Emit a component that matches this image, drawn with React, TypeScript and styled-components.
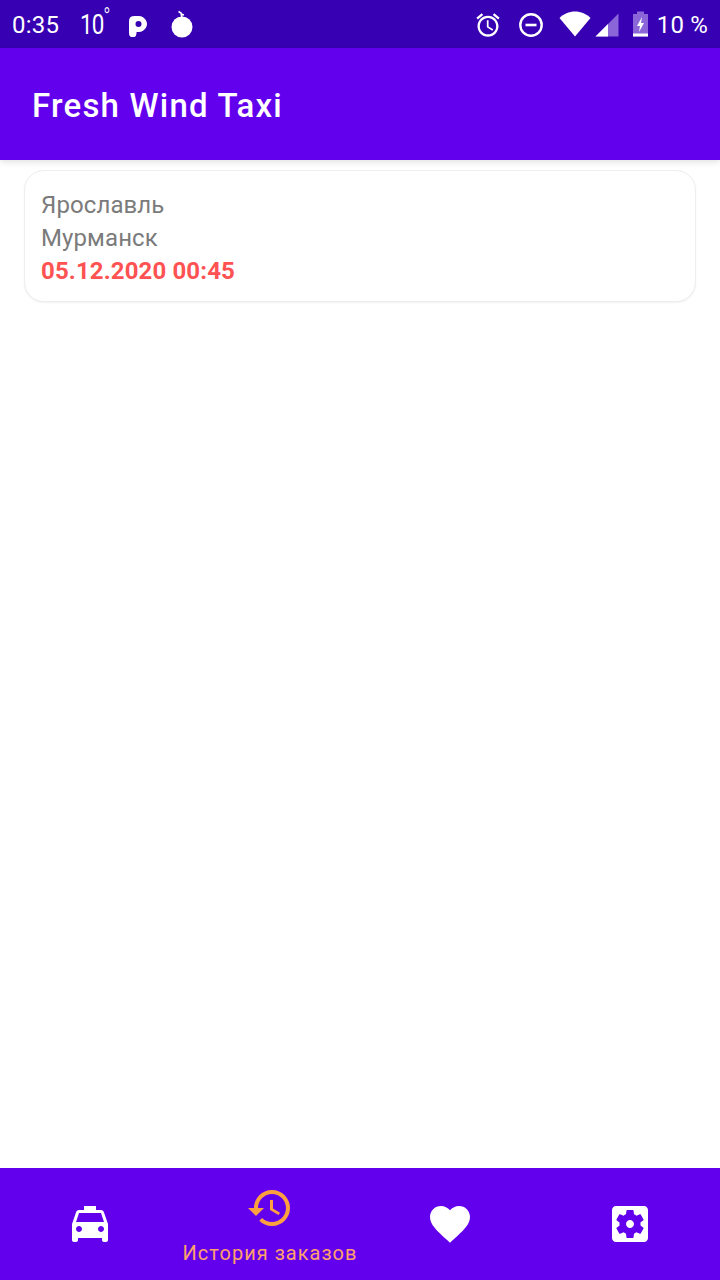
import * as React from "react";
import styled, { createGlobalStyle } from "styled-components";

const GlobalStyle = createGlobalStyle`
  html, body {
    margin: 0;
    padding: 0;
    background: #ffffff;
  }
  * {
    box-sizing: border-box;
  }
`;

/// Styles

const Screen = styled.div`
  display: flex;
  flex-direction: column;
  width: 720px;
  height: 1280px;
  overflow: hidden;
  background: #ffffff;
  font-family: Roboto, "Noto Sans", sans-serif;
`;

const StatusBar = styled.div`
  display: flex;
  justify-content: space-between;
  align-items: center;
  height: 48px;
  padding: 0 12px 0 12px;
  background: #3700b3;
  color: #ffffff;
`;

const StatusGroup = styled.div`
  display: flex;
  align-items: center;
`;

const StatusText = styled.span<{ $gap?: number }>`
  margin-left: ${p => p.$gap || 0}px;
  padding-top: 2px;
  font-size: 24px;
  font-weight: 400;
  letter-spacing: 0.2px;
  line-height: 48px;
  white-space: nowrap;
`;

const Temperature = styled.span`
  position: relative;
  margin-left: 21px;
  width: 48px;
  padding-top: 2px;
  font-size: 28px;
  font-weight: 400;
  line-height: 48px;
  letter-spacing: -1px;
  transform-origin: left center;
  transform: scaleX(0.8);

  sup {
    position: absolute;
    top: -6px;
    left: 29px;
    font-size: 24px;
    font-weight: 300;
  }
`;

const StatusIcon = styled.svg<{ $gap?: number; $drop?: number }>`
  display: block;
  flex: none;
  margin-left: ${p => p.$gap || 0}px;
  margin-top: ${p => p.$drop || 0}px;
`;

const AppBar = styled.header`
  position: relative;
  z-index: 1;
  display: flex;
  align-items: center;
  height: 112px;
  padding-left: 32px;
  background: #6200ee;
  box-shadow: 0 2px 6px rgba(0, 0, 0, 0.12);
`;

const Title = styled.h1`
  margin: 2px 0 0;
  color: #ffffff;
  font-size: 33px;
  font-weight: 500;
  letter-spacing: 1.2px;
`;

const Content = styled.main`
  flex: 1;
  padding: 10px 24px 0;
`;

const OrderCard = styled.div`
  display: flex;
  flex-direction: column;
  height: 132px;
  padding: 18px 16px 0;
  border: 1px solid #eeeeee;
  border-radius: 20px;
  background: #ffffff;
  box-shadow: 0 1px 2px rgba(0, 0, 0, 0.06);
`;

const City = styled.div`
  color: #7b7b7b;
  font-size: 24px;
  letter-spacing: 0.1px;
  line-height: 33px;
`;

const OrderDate = styled.div`
  color: #ff5252;
  font-size: 24px;
  font-weight: 700;
  letter-spacing: 0.13px;
  line-height: 33px;
`;

const BottomNav = styled.nav`
  display: grid;
  grid-template-columns: repeat(4, 1fr);
  height: 112px;
  background: #6200ee;
`;

const NavItem = styled.div<{ $active?: boolean }>`
  display: flex;
  flex-direction: column;
  align-items: center;
  justify-content: ${p => (p.$active ? "flex-start" : "center")};
  padding-top: ${p => (p.$active ? "16px" : "0")};
  color: ${p => (p.$active ? "#ffa040" : "#ffffff")};
`;

const NavLabel = styled.span`
  margin-top: 7px;
  color: #ffa26b;
  font-size: 20px;
  line-height: 28px;
  letter-spacing: 1px;
  white-space: nowrap;
`;

/// Icons

const NavIcon: React.FunctionComponent<{ d: string }> = ({ d }) => (
  <svg width={48} height={48} viewBox="0 0 24 24" fill="currentColor">
    <path d={d} />
  </svg>
);

const TAXI =
  "M18.92 6.01C18.72 5.42 18.16 5 17.5 5H15V3H9v2H6.5c-.66 0-1.21.42-1.42 1.01L3 12v8c0 .55.45 1 1 1h1c.55 0 1-.45 1-1v-1h12v1c0 .55.45 1 1 1h1c.55 0 1-.45 1-1v-8l-2.08-5.99zM6.5 16c-.83 0-1.5-.67-1.5-1.5S5.67 13 6.5 13s1.5.67 1.5 1.5S7.33 16 6.5 16zm11 0c-.83 0-1.5-.67-1.5-1.5s.67-1.5 1.5-1.5 1.5.67 1.5 1.5-.67 1.5-1.5 1.5zM5 11l1.5-4.5h11L19 11H5z";
const HISTORY =
  "M13 3c-4.97 0-9 4.03-9 9H1l3.89 3.89.07.14L9 12H6c0-3.87 3.13-7 7-7s7 3.13 7 7-3.13 7-7 7c-1.93 0-3.68-.79-4.94-2.06l-1.42 1.42C8.27 19.99 10.51 21 13 21c4.97 0 9-4.03 9-9s-4.03-9-9-9zm-1 5v5l4.28 2.54.72-1.21-3.5-2.08V8H12z";
const HEART =
  "M12 21.35l-1.45-1.32C5.4 15.36 2 12.28 2 8.5 2 5.42 4.42 3 7.5 3c1.74 0 3.41.81 4.5 2.09C13.09 3.81 14.76 3 16.5 3 19.58 3 22 5.42 22 8.5c0 3.78-3.4 6.86-8.55 11.54L12 21.35z";
const SETTINGS =
  "M12 10c-1.1 0-2 .9-2 2s.9 2 2 2 2-.9 2-2-.9-2-2-2zm7-7H5c-1.11 0-2 .9-2 2v14c0 1.1.89 2 2 2h14c1.11 0 2-.9 2-2V5c0-1.1-.89-2-2-2zm-1.75 9c0 .23-.02.46-.05.68l1.48 1.16c.13.11.17.3.08.45l-1.4 2.42c-.09.15-.27.21-.43.15l-1.74-.7c-.36.28-.76.51-1.18.69l-.26 1.85c-.03.17-.18.3-.35.3h-2.8c-.17 0-.32-.13-.35-.29l-.26-1.85c-.43-.18-.82-.41-1.18-.69l-1.74.7c-.16.06-.34 0-.43-.15l-1.4-2.42c-.09-.15-.05-.34.08-.45l1.48-1.16c-.03-.23-.05-.46-.05-.69 0-.23.02-.46.05-.68l-1.48-1.16c-.13-.11-.17-.3-.08-.45l1.4-2.42c.09-.15.27-.21.43-.15l1.74.7c.36-.28.76-.51 1.18-.69l.26-1.85c.03-.17.18-.3.35-.3h2.8c.17 0 .32.13.35.29l.26 1.85c.43.18.82.41 1.18.69l1.74-.7c.16-.06.34 0 .43.15l1.4 2.42c.09.15.05.34-.08.45l-1.48 1.16c.03.23.05.46.05.69z";
const ALARM =
  "M22 5.72l-4.6-3.86-1.29 1.53 4.6 3.86L22 5.72zM7.88 3.39L6.6 1.86 2 5.71l1.29 1.53 4.59-3.85zM12.5 8H11v6l4.75 2.85.75-1.23-4-2.37V8zM12 4c-4.97 0-9 4.03-9 9s4.03 9 9 9 9-4.03 9-9-4.03-9-9-9zm0 16c-3.87 0-7-3.13-7-7s3.13-7 7-7 7 3.13 7 7-3.13 7-7 7z";

const App: React.FunctionComponent = () => (
  <Screen>
    <GlobalStyle />
    <StatusBar>
      <StatusGroup>
        <StatusText>0:35</StatusText>
        <Temperature>
          10<sup>°</sup>
        </Temperature>
        <StatusIcon $drop={3} width={20} height={22} viewBox="0 0 20 22">
          <path
            d="M1.5 5.5A4 4 0 0 1 5.5 1.5H11a7.5 7.5 0 0 1 0 15H8v2.2a3.2 3.2 0 0 1-6.5 0z"
            fill="#fff"
            stroke="#fff"
            strokeWidth="1"
          />
          <circle cx="10.5" cy="9" r="3" fill="#3700b3" />
        </StatusIcon>
        <StatusIcon $gap={23} width={22} height={28} viewBox="0 0 22 28">
          <circle cx="11" cy="17" r="10.5" fill="#fff" />
          <path d="M11 8 L10 3 L7.5 1.5 M10 4 L13 5" fill="none" stroke="#fff" strokeWidth="1.6" />
        </StatusIcon>
      </StatusGroup>
      <StatusGroup>
        <StatusIcon $drop={1} width={28} height={28} viewBox="0 0 24 24" fill="#fff">
          <path d={ALARM} />
        </StatusIcon>
        <StatusIcon $gap={16} $drop={1} width={26} height={26} viewBox="0 0 26 26">
          <circle cx="13" cy="13" r="10.7" fill="none" stroke="#fff" strokeWidth="2.4" />
          <rect x="7.5" y="11.7" width="11" height="2.6" fill="#fff" />
        </StatusIcon>
        <StatusIcon $gap={15} $drop={-1} width={32} height={26} viewBox="0 0 32 26">
          <path d="M16 25.5 L0.5 7 C4.5 3 10 0.5 16 0.5 C22 0.5 27.5 3 31.5 7 Z" fill="#fff" />
        </StatusIcon>
        <StatusIcon $gap={4} $drop={1} width={24} height={24} viewBox="0 0 24 24">
          <path d="M23.5 0.5 V23.5 H0.5 Z" fill="#8a66d9" />
          <path d="M13 11 V23.5 H0.5 Z" fill="#fff" />
        </StatusIcon>
        <StatusIcon $gap={13} width={17} height={26} viewBox="0 0 17 26">
          <path d="M5 0.5 H12 V3 H16 V25.5 H1 V3 H5 Z" fill="#8a66d9" />
          <path d="M1 22.5 H16 V25.5 H1 Z" fill="#fff" />
          <path d="M10 6 L5 15 H8 L7 21 L12 12 H9 Z" fill="#fff" />
        </StatusIcon>
        <StatusText $gap={8}>10 %</StatusText>
      </StatusGroup>
    </StatusBar>
    <AppBar>
      <Title>Fresh Wind Taxi</Title>
    </AppBar>
    <Content>
      <OrderCard>
        <City>Ярославль</City>
        <City>Мурманск</City>
        <OrderDate>05.12.2020 00:45</OrderDate>
      </OrderCard>
    </Content>
    <BottomNav>
      <NavItem>
        <NavIcon d={TAXI} />
      </NavItem>
      <NavItem $active>
        <NavIcon d={HISTORY} />
        <NavLabel>История заказов</NavLabel>
      </NavItem>
      <NavItem>
        <NavIcon d={HEART} />
      </NavItem>
      <NavItem>
        <NavIcon d={SETTINGS} />
      </NavItem>
    </BottomNav>
  </Screen>
);

export default App;
